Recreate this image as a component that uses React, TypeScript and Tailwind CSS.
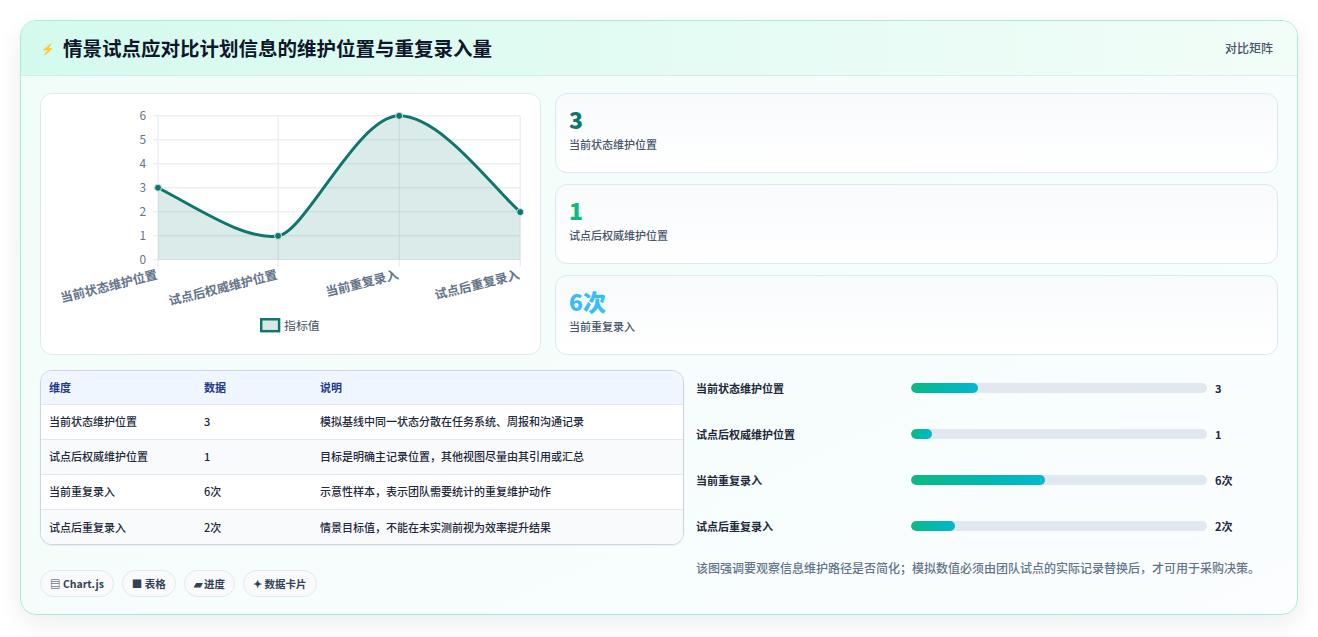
import React from "react";

const ROWS = [
  { name: "当前状态维护位置", value: "3", note: "模拟基线中同一状态分散在任务系统、周报和沟通记录", pct: 22.6 },
  { name: "试点后权威维护位置", value: "1", note: "目标是明确主记录位置，其他视图尽量由其引用或汇总", pct: 7.2 },
  { name: "当前重复录入", value: "6次", note: "示意性样本，表示团队需要统计的重复维护动作", pct: 45.2 },
  { name: "试点后重复录入", value: "2次", note: "情景目标值，不能在未实测前视为效率提升结果", pct: 15 },
];

const STATS = [
  { value: "3", label: "当前状态维护位置", color: "text-[#0f766e]" },
  { value: "1", label: "试点后权威维护位置", color: "text-[#10b981]" },
  { value: "6次", label: "当前重复录入", color: "text-[#38bdf8]" },
];

function LineChart() {
  const xs = [117, 238, 360, 482];
  const ys = [94.5, 143, 22, 119];
  const grid = [0, 1, 2, 3, 4, 5, 6];
  const curve = "M117,94.5 C157,115 205,148 238,143 C266,139 318,22 360,22 C402,22 455,95 482,119";
  const labels = ["当前状态维护位置", "试点后权威维护位置", "当前重复录入", "试点后重复录入"];
  return (
    <svg viewBox="0 0 501 262" className="w-full h-full" style={{ fontFamily: "'Noto Sans CJK SC', sans-serif" }}>
      {grid.map((g) => {
        const y = 167 - g * 24.17;
        return (
          <g key={g}>
            <line x1={112} x2={482} y1={y} y2={y} stroke="#e2e8f0" strokeWidth={1} />
            <text x={105} y={y + 4} fontSize={12} fill="#64748b" textAnchor="end">{g}</text>
          </g>
        );
      })}
      {xs.map((x) => (
        <line key={x} x1={x} x2={x} y1={22} y2={174} stroke="#e2e8f0" strokeWidth={1} />
      ))}
      <path d={`${curve} L482,167 L117,167 Z`} fill="rgba(15,118,110,0.15)" />
      <path d={curve} fill="none" stroke="#0f766e" strokeWidth={3} />
      {xs.map((x, i) => (
        <circle key={x} cx={x} cy={ys[i]} r={3.5} fill="#0f766e" stroke="#d1e7e4" strokeWidth={1} />
      ))}
      {labels.map((l, i) => (
        <text
          key={l}
          x={xs[i]}
          y={186}
          fontSize={12.5}
          fontWeight={700}
          fill="#64748b"
          textAnchor="end"
          transform={`rotate(-14 ${xs[i]} 186)`}
        >
          {l}
        </text>
      ))}
      <rect x={221} y={227} width={18} height={12} fill="#d9e8e6" stroke="#0f766e" strokeWidth={2.5} />
      <text x={244} y={238} fontSize={12} fill="#475569">指标值</text>
    </svg>
  );
}

export default function App() {
  return (
    <div
      className="bg-white px-5 pt-5 pb-5 min-h-[637px]"
      style={{ fontFamily: "'Noto Sans CJK SC', 'Noto Sans', sans-serif" }}
    >
      <div className="rounded-2xl border border-[#a7ecd9] bg-gradient-to-br from-[#f0fdf8] to-[#fbfdff] shadow-[0_8px_24px_rgba(15,23,42,0.08)] overflow-hidden">
        <div className="h-[55px] flex items-center justify-between px-5 bg-gradient-to-r from-[#d4faee] to-[#f2fdf8] border-b border-[#d8ebf2]">
          <div className="flex items-center gap-2">
            <span className="text-[11px] text-[#2563eb]">⚡</span>
            <h1 className="text-[19.5px] font-bold text-[#0f172a]">情景试点应对比计划信息的维护位置与重复录入量</h1>
          </div>
          <span className="text-[12px] text-[#475569] font-medium pr-1">对比矩阵</span>
        </div>

        <div className="px-[19px] pt-[17px] pb-[17px]">
          <div className="grid grid-cols-[501px_1fr] gap-[14px]">
            <div className="h-[262px] rounded-xl border border-[#e2e8f0] bg-white">
              <LineChart />
            </div>
            <div className="flex flex-col gap-[11px]">
              {STATS.map((s) => (
                <div key={s.label} className="h-[80px] rounded-xl border border-[#dbe7f3] bg-gradient-to-b from-[#f8fafc] to-white px-[13px] pt-[10px]">
                  <div className={`text-[23px] font-extrabold leading-[30px] ${s.color}`}>{s.value}</div>
                  <div className="text-[11px] text-[#475569] font-medium mt-[2px]">{s.label}</div>
                </div>
              ))}
            </div>
          </div>

          <div className="grid grid-cols-[644px_1fr] gap-[12px] mt-[15px]">
            <div>
              <div className="rounded-xl border border-[#cbd5e1] overflow-hidden bg-white shadow-[0_1px_2px_rgba(15,23,42,0.06)]">
                <table className="w-full text-[11px] border-collapse font-medium">
                  <thead>
                    <tr className="bg-[#eff6ff] h-[33px] text-left text-[#1e3a8a]">
                      <th className="pl-[8px] w-[163px] font-semibold">维度</th>
                      <th className="w-[116px] font-semibold">数据</th>
                      <th className="font-semibold">说明</th>
                    </tr>
                  </thead>
                  <tbody>
                    {ROWS.map((r, i) => (
                      <tr key={r.name} className={`h-[35px] border-t border-[#e2e8f0] text-[#1e293b] ${i % 2 === 1 ? "bg-[#f8fafc]" : "bg-white"}`}>
                        <td className="pl-[8px]">{r.name}</td>
                        <td>{r.value}</td>
                        <td>{r.note}</td>
                      </tr>
                    ))}
                  </tbody>
                </table>
              </div>
              <div className="flex gap-[8px] mt-[25px]">
                {["▤ Chart.js", "■ 表格", "▰ 进度", "✦ 数据卡片"].map((p) => (
                  <span key={p} className="h-[27px] px-[9px] flex items-center rounded-full border border-[#e2e8f0] bg-[#f8fafc] text-[10.5px] font-semibold text-[#334155]">
                    {p}
                  </span>
                ))}
              </div>
            </div>

            <div className="-mt-[5px]">
              {ROWS.map((r) => (
                <div key={r.name} className="h-[46px] flex items-center">
                  <span className="w-[215px] text-[11px] font-semibold text-[#1e293b]">{r.name}</span>
                  <div className="w-[296px] h-[10px] rounded-full bg-[#e2e8f0] overflow-hidden">
                    <div className="h-full rounded-full bg-gradient-to-r from-[#10b981] to-[#06b6d4]" style={{ width: `${r.pct}%` }} />
                  </div>
                  <span className="ml-[8px] text-[11px] font-bold text-[#1e293b]">{r.value}</span>
                </div>
              ))}
              <p className="mt-[9px] max-w-[575px] text-[12px] leading-[20px] text-[#64748b] font-medium">
                该图强调要观察信息维护路径是否简化；模拟数值必须由团队试点的实际记录替换后，才可用于采购决策。
              </p>
            </div>
          </div>
        </div>
      </div>
    </div>
  );
}
